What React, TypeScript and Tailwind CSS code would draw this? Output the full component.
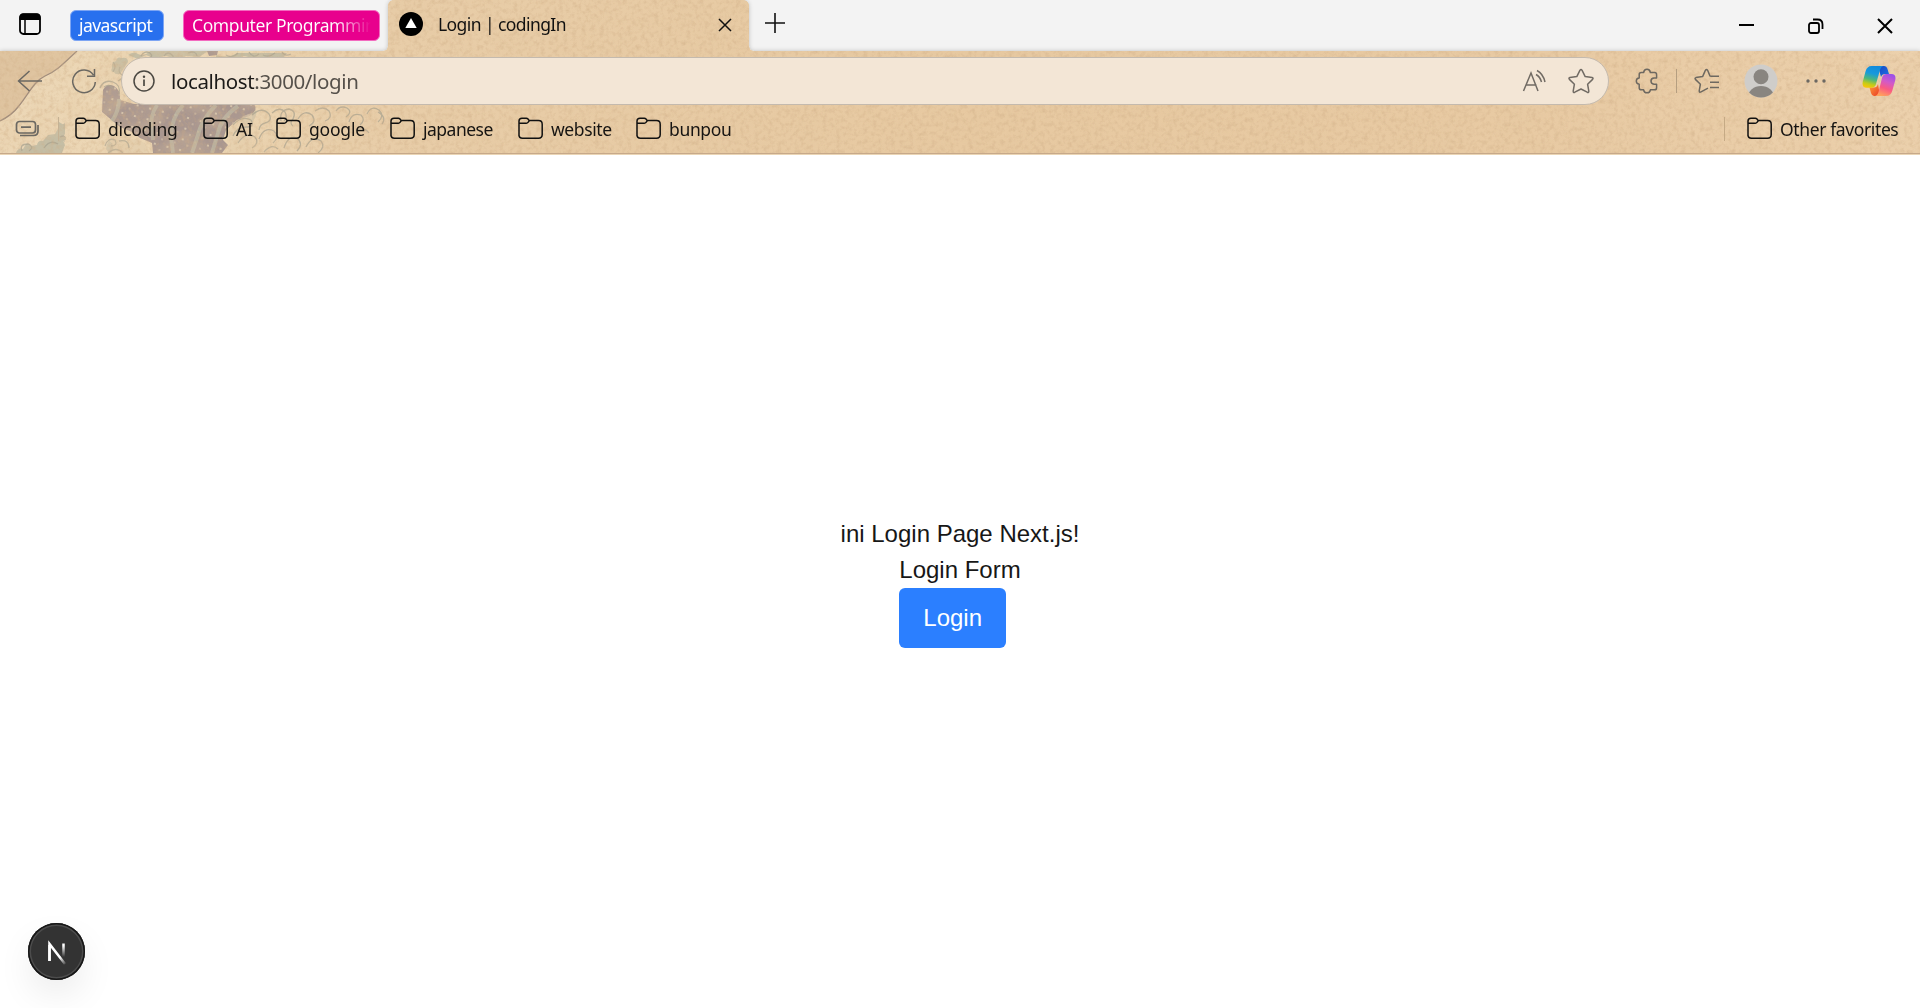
import type { ReactNode } from "react";

function HeaderArt() {
  const shape =
    "M0 51H383Q388 51 388 46V7Q388 0 395 0H742Q749 0 749 7V46Q749 51 754 51H1920V155H0Z";
  return (
    <svg className="absolute inset-0 -z-10" width="1920" height="155" viewBox="0 0 1920 155" fill="none">
      <defs>
        <linearGradient id="paper" x1="0" x2="1920" y1="0" y2="0" gradientUnits="userSpaceOnUse">
          <stop offset="0" stopColor="#ecd7b6" />
          <stop offset="0.12" stopColor="#ebd5b2" />
          <stop offset="0.2" stopColor="#e8cda8" />
          <stop offset="0.5" stopColor="#e7c9a1" />
          <stop offset="0.8" stopColor="#e8caa3" />
          <stop offset="1" stopColor="#ecd1ad" />
        </linearGradient>
        <filter id="grain" x="0" y="0" width="100%" height="100%">
          <feTurbulence type="fractalNoise" baseFrequency="0.22" numOctaves="3" seed="4" />
          <feColorMatrix values="0 0 0 0 0.62  0 0 0 0 0.42  0 0 0 0 0.24  1.6 0 0 0 -0.7" />
        </filter>
        <filter id="mottle" x="0" y="0" width="100%" height="100%">
          <feTurbulence type="fractalNoise" baseFrequency="0.03 0.05" numOctaves="2" seed="9" />
          <feColorMatrix values="0 0 0 0 0.78  0 0 0 0 0.58  0 0 0 0 0.36  1.4 0 0 0 -0.6" />
        </filter>
        <filter id="tabShadow" x="-5%" y="-20%" width="110%" height="140%">
          <feDropShadow dx="0" dy="0" stdDeviation="2" floodColor="#000" floodOpacity="0.22" />
        </filter>
        <clipPath id="headerShape">
          <path d={shape} />
        </clipPath>
        <pattern id="dots" width="13" height="11" patternUnits="userSpaceOnUse" patternTransform="rotate(14)">
          <circle cx="3" cy="3" r="1.100" fill="#decdb2" />
          <circle cx="9" cy="8" r="0.9" fill="#cdb9a2" />
        </pattern>
      </defs>
      <path d={shape} fill="#e2c59d" filter="url(#tabShadow)" />
      <g clipPath="url(#headerShape)">
        <rect width="1920" height="155" fill="url(#paper)" />
        <path d="M0 51H77C64 63 57 71 45 76C34 81 28 95 18 107C12 115 6 118 0 121Z" fill="#dfc4a0" />
        <path d="M77 51C64 63 57 71 45 76C34 81 28 95 18 107C12 115 6 118 0 121" stroke="#a08c7c" strokeWidth="1.3" />
        <g fill="#bcb8a2" opacity="0.8">
          <path d="M112 68q-1-6 4-7q1-5 6-3q6-1 6 4l-8 12q-5 1-6-2q-4 0-2-4Z" />
          <path d="M16 153q2-6 7-4l3-5q4-2 5 2l6-1q1-5 6-4l5-6 7-1 4-7 6-4v11l-3 4 3 7-3 8Z" />
          <path d="M59 122l5 3-1 8 2 9-6-3Z" />
          <path d="M106 149q1-11 10-10l5 5q10 0 9 9h-21Z" opacity="0.7" />
          <path d="M128 55q6-4 10-1q6 3 12-3h58l-9 6-13-1-9 3-11-3-12 2-8-3-8 4Z" />
          <path d="M216 55q12 4 21-2h50l-4 5-15-1-10 2-14-3-12 4-16-2Z" />
          <path d="M254 106q5 8-1 15q-8 7-12 1l4-9Z" opacity="0.55" />
        </g>
        <g fill="#a99790">
          <path d="M103 90q4-7 11-4q7 4 6 14l14 4H254q5 6-5 12l-12 4-11 10-3 10 5 5-6 8h-69l-1-10-12-5-8-6-12-5-12-10-6-5Z" />
          <path d="M207 51h11l-1 4-8 1Z" />
        </g>
        <path d="M103 90q4-7 11-4q7 4 6 14l14 4H254q5 6-5 12l-12 4-11 10-3 10 5 5-6 8h-69l-1-10-12-5-8-6-12-5-12-10-6-5Z" fill="url(#dots)" />
        <g stroke="#bdb7a2" strokeWidth="4" opacity="0.8">
          <path d="M112 121q7-10 7-22M157 105q-8 12-5 26l1 9M183 105q-12 13-12 32l2 16M216 105q-15 15-19 33l-5 15M238 106q-17 12-20 27l-6 20" />
        </g>
        <path d="M110 126q8 2 13 8q5 6 13 5l5 2q7 3 8 12h-38q4-5 1-10q-8-5-2-17Z" fill="#e4cfae" opacity="0.9" />
        <path d="M228 128q10-4 15-12l9-3v40h-26l5-10Z" fill="#e4cfae" opacity="0.55" />
        <g stroke="#a9a390" strokeWidth="1.3" opacity="0.75">
          <path d="M100 88q4-9 13-6q8 3 6 12M104 87q6-4 9 2M105 146q3-9 10-6q3 6-4 6M119 141q10-2 10 7M108 153q8-7 15 0" />
          <path d="M113 72q4-6 0-10M120 67q-3 6 4 9M118 81q6-3 7-7" />
          <path d="M233 125q9-10 18-5q4 7-5 7q-9 0-13 9M252 115q10-9 17-1q4 7-4 9q-5 1-6 7M272 113q8-7 13-1q3 5-1 9M238 143q8-12 17-6q5 6-3 11M259 139q5-13 15-8q6 6-1 12M281 121q-2-11 8-12q8 2 4 10q-4 4 0 7M298 119q6-10 14-4q5 7-3 11M315 111q8-6 14 0q4 7-4 10M336 111q4-6 11-3q6 4-1 9M349 122q3-10 12-7q5 5-1 10M367 114q4-9 12-4q6 6-1 12M284 148q4-13 13-10q7 6 0 13M306 147q6-12 15-6q5 6-3 12M356 130q9-3 13 3M264 152q8-9 14-3" />
          <path d="M141 56q3-6 9-3q4 4-2 5M164 56q4-6 9 0q1 3-4 2M188 53q8-3 9 3M226 55q6 4 12-2M249 52q4 7 10 2M263 55q6 3 12-2M282 52q3 5 9 2M378 112q9 5 4 12" />
          <path d="M22 151q-3-7 6-7q7 3 1 7M44 148q6-9 14-4M60 137q6-3 5 3" />
        </g>
        <rect width="1920" height="155" filter="url(#mottle)" opacity="0.6" />
        <rect width="1920" height="155" filter="url(#grain)" opacity="0.65" />
        <path d="M0 153.5H1920" stroke="#c7a98a" />
        <path d="M0 154.5H1920" stroke="#ead5b5" />
      </g>
    </svg>
  );
}

function Folder() {
  return (
    <svg width="26" height="24" viewBox="0 0 26 24" fill="none" stroke="#111" strokeWidth="1.500" className="shrink-0">
      <path d="M1 19V4Q1 1.2 4 1.2H8.3Q9.3 1.2 10 2L11.3 3.6H20.5Q24.2 3.6 24.2 7.2V17.5Q24.2 21.2 20.5 21.2H4.5Q1 21.2 1 18Z" />
      <path d="M1 6.2H8.3Q9.4 6.2 10 5.4L11.3 3.6" />
    </svg>
  );
}

function Bookmark({ children, className }: { children: ReactNode; className: string }) {
  return (
    <div className={`flex shrink-0 items-center gap-[7px] ${className}`}>
      <Folder />
      <span className="whitespace-nowrap">{children}</span>
    </div>
  );
}

function CopilotLogo() {
  return (
    <svg width="34" height="32" viewBox="0 0 34 32">
      <defs>
        <linearGradient id="cpBlue" x1="0.6" y1="0" x2="0.35" y2="1">
          <stop offset="0" stopColor="#128bdc" />
          <stop offset="0.35" stopColor="#1799dc" />
          <stop offset="0.62" stopColor="#4cb77c" />
          <stop offset="0.85" stopColor="#c8cc16" />
          <stop offset="1" stopColor="#f4c60a" />
        </linearGradient>
        <linearGradient id="cpPink" x1="0.7" y1="0" x2="0.35" y2="1">
          <stop offset="0" stopColor="#9b50e8" />
          <stop offset="0.35" stopColor="#d25ac8" />
          <stop offset="0.65" stopColor="#fa5b82" />
          <stop offset="1" stopColor="#ffa25c" />
        </linearGradient>
        <linearGradient id="cpNavy" x1="0" y1="0" x2="1" y2="1">
          <stop offset="0" stopColor="#1746c0" />
          <stop offset="1" stopColor="#1e72e8" />
        </linearGradient>
        <linearGradient id="cpRed" x1="0" y1="0" x2="1" y2="1">
          <stop offset="0" stopColor="#ffa13a" />
          <stop offset="1" stopColor="#e93826" />
        </linearGradient>
      </defs>
      <path d="M16 1H22Q24.600 1 25.500 4L27 9H23Q20 9 19 12Z" fill="url(#cpNavy)" />
      <path d="M18 31H12Q9.800 31 9 28L7.500 22.500H12Q15 22.500 16 19Z" fill="url(#cpRed)" />
      <path d="M9.500 1H21.500Q19 1.500 18 5L14 19Q13 22.800 9.500 22.800H4.500Q-.3 22.800.7 17L3.500 6.500Q5 1 9.500 1Z" fill="url(#cpBlue)" />
      <path d="M24.500 9H29.500Q34.300 9 33.300 15L30.500 25Q29 31 24 31H13Q15.500 30.500 16.500 27L20 13Q21 9 24.500 9Z" fill="url(#cpPink)" />
    </svg>
  );
}

function TabStrip() {
  return (
    <div className="flex h-[51px] text-[17px]">
      <div className="flex w-[388px] shrink-0 pl-[18px] pt-[10px]">
        <svg width="24" height="24" viewBox="0 0 24 24" fill="none" className="mt-[2px] shrink-0">
          <rect x="2" y="2.200" width="20" height="19.800" rx="3.500" stroke="#000" strokeWidth="1.800" />
          <path d="M1.500 8V5Q1.500 1.500 5 1.500H19Q22.500 1.500 22.500 5V8Z" fill="#000" />
          <path d="M7 7V22" stroke="#000" strokeWidth="1.500" />
        </svg>
        <div className="ml-[28px] flex h-[31px] w-[94px] items-center rounded-[6px] border border-[#7da5f3] bg-[#2870ee] pl-[8px] text-white">
          <span className="whitespace-nowrap text-[17.500px] tracking-[-0.55px]">javascript</span>
        </div>
        <div className="ml-[19px] flex h-[31px] w-[197px] items-center rounded-[6px] border border-[#f36abf] bg-[#e8008d] pl-[8px]">
          <span className="w-[179px] whitespace-nowrap bg-gradient-to-r from-white from-80% to-transparent bg-clip-text text-[17.500px] tracking-[-0.4px] text-transparent">
            Computer Programmin
          </span>
        </div>
      </div>
      <div className="flex w-[361px] shrink-0 items-center pb-[3px] pl-[11px] text-[#111]">
        <svg width="24" height="24" viewBox="0 0 24 24" className="shrink-0">
          <circle cx="12" cy="12" r="12" fill="#000" />
          <path d="M12 6L17.700 16H6.300Z" fill="#fff" />
        </svg>
        <span className="ml-[15px] w-[280px] whitespace-nowrap text-[17.500px] tracking-[-0.58px]">Login | codingIn</span>
        <svg width="14" height="14" viewBox="0 0 14 14" stroke="#111" strokeWidth="1.500" className="relative top-[1px] shrink-0">
          <path d="M1 1L13 13M13 1L1 13" />
        </svg>
      </div>
      <svg width="22" height="22" viewBox="0 0 22 22" stroke="#111" strokeWidth="1.600" className="ml-[15px] mt-[12px]">
        <path d="M11 1V21M1 11H21" />
      </svg>
      <div className="ml-auto flex items-center pr-[27px]">
        <svg width="16" height="16" viewBox="0 0 16 16" stroke="#000" strokeWidth="2">
          <path d="M0 7H15" />
        </svg>
        <svg width="16" height="16" viewBox="0 0 16 16" fill="none" stroke="#000" strokeWidth="1.800" className="ml-[53px]">
          <rect x="1" y="5" width="10" height="10" rx="2" />
          <path d="M5 1.500H9.500Q14.500 1.500 14.500 6.500V11" />
        </svg>
        <svg width="16" height="16" viewBox="0 0 16 16" stroke="#000" strokeWidth="2" className="ml-[53px]">
          <path d="M1 1L15 15M15 1L1 15" />
        </svg>
      </div>
    </div>
  );
}

function AddressRow() {
  return (
    <div className="flex h-[60px] items-center">
      <svg width="26" height="24" viewBox="0 0 26 24" fill="none" stroke="#6b6862" strokeWidth="1.500" className="-mt-px ml-[17px]">
        <path d="M25 12H1.500M12.500 2L1.500 12L12.500 22" />
      </svg>
      <svg width="26" height="26" viewBox="0 0 26 26" fill="none" stroke="#6b6862" strokeWidth="1.500" className="ml-[28px]">
        <path d="M24.300 14A11.300 11.300 0 1 1 22.500 7.200M23.500 1V8.300H16" />
      </svg>
      <div className="ml-[24px] flex h-[48px] w-[1488px] items-center rounded-full border border-[#c4baae] bg-[#f3e6d6] pl-[11px]">
        <svg width="22" height="22" viewBox="0 0 22 22" fill="none" stroke="#4b4842" strokeWidth="1.500">
          <circle cx="11" cy="11" r="10" />
          <path d="M11 9.500V16" strokeWidth="1.700" />
          <circle cx="11" cy="6.700" r="1.200" fill="#4b4842" stroke="none" />
        </svg>
        <span className="ml-[16px] text-[20.500px] tracking-[-0.37px] text-[#55504a]">
          <span className="text-[#1c1a18]">localhost</span>:3000/login
        </span>
        <svg width="24" height="24" viewBox="0 0 24 24" fill="none" stroke="#716b64" strokeWidth="1.500" className="ml-auto">
          <path d="M1.500 22L9 4L16 22M4 16H14.500M15 1.500Q21 4.500 23 13M14 5.500Q18 7.500 19.500 13" />
        </svg>
        <svg width="26" height="26" viewBox="0 0 26 26" fill="none" stroke="#716b64" strokeWidth="1.500" strokeLinejoin="round" className="ml-[22px] mr-[14px]">
          <path d="M11.900 2.300Q13 .5 14.100 2.300L17.200 8.600L24.100 9.600Q25.700 10 24.600 11.400L19.600 16.200L20.800 23.100Q20.900 25 19.200 24.200L13 21L6.800 24.200Q5.100 25 5.200 23.100L6.400 16.200L1.400 11.400Q.3 10 1.900 9.600L8.800 8.600Z" />
        </svg>
      </div>
      <svg width="24" height="26" viewBox="0 0 24 26" fill="none" stroke="#6d6860" strokeWidth="1.500" strokeLinejoin="round" className="ml-[26px]">
        <path d="M8.600 4.600Q9 1.300 12 1.300T15.400 4.600H19.500Q21.600 4.600 21.600 6.700V10H19Q16 10.300 16 13T19 16.200H21.600V19.700Q21.600 21.800 19.500 21.800H15.400Q15 24.800 12 24.800T8.600 21.800H6.300Q4.200 21.800 4.200 19.700V16.200Q1.300 15.800 1.300 13T4.200 10V6.700Q4.200 4.600 6.300 4.600Z" />
      </svg>
      <div className="ml-[17px] h-[24px] w-px bg-[#b59e80]" />
      <svg width="26" height="26" viewBox="0 0 26 26" fill="none" stroke="#6d6860" strokeWidth="1.500" strokeLinejoin="round" className="ml-[17px]">
        <path d="M25 8.300H17.500L16 8L13.600 2.300Q12.500 .5 11.400 2.300L8.600 8.600L1.900 9.600Q.5 10 1.400 11.400L6.400 16.200L5.200 22.800Q5.200 24.800 7 23.800L14 20.200M16 14.300H25M16 19.500H25" />
      </svg>
      <svg width="34" height="34" viewBox="0 0 34 34" className="ml-[24px]">
        <defs>
          <clipPath id="avatar">
            <circle cx="17" cy="17" r="16.500" />
          </clipPath>
        </defs>
        <circle cx="17" cy="17" r="16.500" fill="#cfcdca" />
        <g fill="#898580" clipPath="url(#avatar)">
          <circle cx="17" cy="12.800" r="7.500" />
          <ellipse cx="17" cy="33" rx="13" ry="11" />
        </g>
      </svg>
      <svg width="22" height="6" viewBox="0 0 22 6" fill="#6b6862" className="ml-[27px]">
        <circle cx="3" cy="3" r="1.700" />
        <circle cx="11" cy="3" r="1.700" />
        <circle cx="19" cy="3" r="1.700" />
      </svg>
      <div className="ml-[35px]">
        <CopilotLogo />
      </div>
    </div>
  );
}

function BookmarksBar() {
  return (
    <div className="flex h-[36px] items-center text-[17.500px] text-[#161412]">
      <svg width="25" height="18" viewBox="0 0 25 18" fill="none" stroke="#6b6862" strokeWidth="1.700" className="ml-[15px] shrink-0">
        <rect x="1.500" y="1.500" width="19" height="11.500" rx="3" />
        <path d="M6 7.200H16M5 15.500H18.500Q23 15.500 23 11V5" />
      </svg>
      <div className="ml-[18px] h-[24px] w-px bg-[#c5b294]" />
      <Bookmark className="ml-[16px] w-[128px] tracking-[-0.18px]">dicoding</Bookmark>
      <Bookmark className="w-[73px] tracking-[-0.3px]">AI</Bookmark>
      <Bookmark className="w-[114px] tracking-[-0.2px]">google</Bookmark>
      <Bookmark className="w-[128px] tracking-[-0.500px]">japanese</Bookmark>
      <Bookmark className="w-[118px] tracking-[-0.4px]">website</Bookmark>
      <Bookmark className="w-[110px] tracking-[-0.35px]">bunpou</Bookmark>
      <div className="ml-auto h-[24px] w-px bg-[#c5aa85]" />
      <Bookmark className="ml-[22px] w-[173px] tracking-[-0.38px]">Other favorites</Bookmark>
    </div>
  );
}

function NextBadge() {
  return (
    <div className="absolute bottom-[28px] left-[28px] flex size-[57px] items-center justify-center rounded-full bg-[#333] shadow-[inset_0_0_0_1.500px_#171717,inset_0_0_0_3px_#4c4c4c,0_16px_40px_-8px_rgba(0,0,0,0.14)]">
      <svg width="58" height="58" viewBox="0 0 58 58" fill="none" className="shrink-0">
        <defs>
          <linearGradient id="nDiagonal" x1="20" y1="21" x2="38" y2="42" gradientUnits="userSpaceOnUse">
            <stop offset="0.65" stopColor="#fff" />
            <stop offset="1" stopColor="#fff" stopOpacity="0" />
          </linearGradient>
          <linearGradient id="nStem" x1="0" y1="20" x2="0" y2="34" gradientUnits="userSpaceOnUse">
            <stop offset="0.2" stopColor="#fff" />
            <stop offset="1" stopColor="#fff" stopOpacity="0" />
          </linearGradient>
        </defs>
        <path d="M21.500 38V21L37 41" stroke="url(#nDiagonal)" strokeWidth="2.500" />
        <path d="M21.500 38V22" stroke="#fff" strokeWidth="2.500" />
        <path d="M35.500 20.500V34" stroke="url(#nStem)" strokeWidth="2.500" />
      </svg>
    </div>
  );
}

export default function App() {
  return (
    <div className="relative flex h-[1008px] w-[1920px] flex-col overflow-hidden bg-white">
      <header className="relative isolate h-[155px] shrink-0 bg-[#f3f3f3] font-['Noto_Sans',sans-serif]">
        <HeaderArt />
        <TabStrip />
        <AddressRow />
        <BookmarksBar />
      </header>
      <main className="flex flex-1 flex-col items-center justify-center font-['Liberation_Sans',Arial,sans-serif] text-[24px] leading-[36px] text-[#171717]">
        <h1>ini Login Page Next.js!</h1>
        <div>
          <h2>Login Form</h2>
          <button className="h-[60px] rounded-[6px] bg-[#2b7fff] px-[24px] text-white">Login</button>
        </div>
      </main>
      <NextBadge />
    </div>
  );
}
